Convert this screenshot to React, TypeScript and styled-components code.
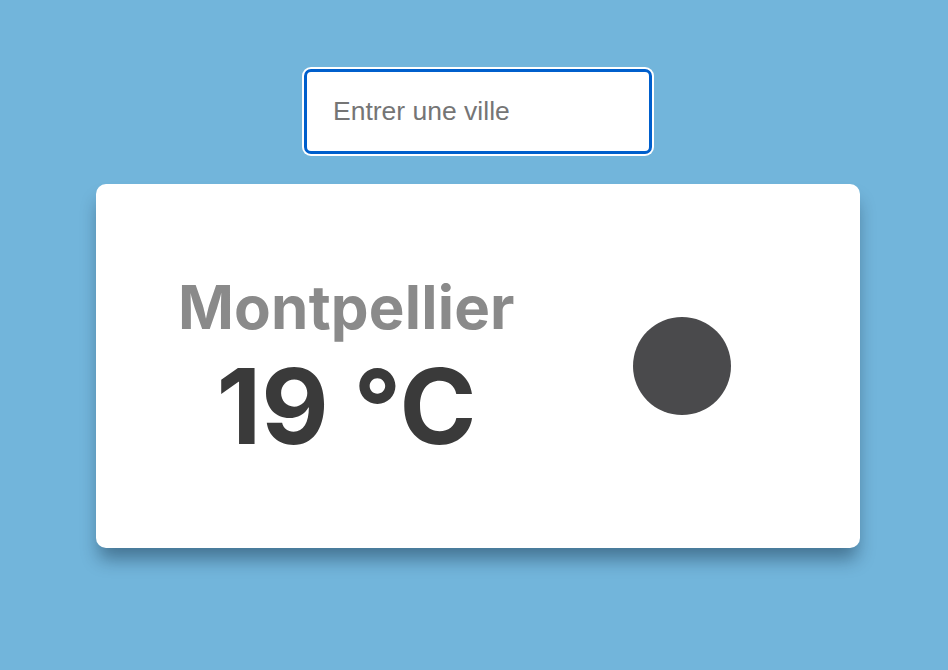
import styled, { createGlobalStyle } from 'styled-components';

const GlobalStyle = createGlobalStyle`
  html, body {
    margin: 0;
    padding: 0;
    overflow: hidden;
    background: #72b5db;
    font-family: Inter, "Liberation Sans", sans-serif;
  }
`;

const Page = styled.main`
  height: 100vh;
  display: flex;
  flex-direction: column;
  align-items: center;
  padding: 69px 0 0 8px;
  box-sizing: border-box;
`;

const SearchInput = styled.input`
  width: 348px;
  height: 85px;
  box-sizing: border-box;
  padding: 0 26px;
  border: 3px solid #005fcc;
  border-radius: 7px;
  box-shadow: 0 0 0 2px #ffffff;
  outline: none;
  background: #ffffff;
  font-family: "Liberation Sans", Arial, sans-serif;
  font-size: 26.5px;
  color: #222;
  caret-color: #000;

  &::placeholder {
    color: #757575;
  }
`;

const Card = styled.section`
  margin-top: 30px;
  width: 764px;
  height: 364px;
  box-sizing: border-box;
  background: #ffffff;
  border-radius: 10px;
  box-shadow: 0 14px 18px -3px rgba(0, 20, 40, 0.4);
  display: flex;
  align-items: center;
  padding-left: 82px;
  gap: 118px;
`;

const Info = styled.div`
  display: flex;
  flex-direction: column;
  align-items: center;
`;

const City = styled.h1`
  margin: 0;
  font-size: 60px;
  font-weight: 700;
  color: #8a8a8a;
  letter-spacing: 0.2px;
  line-height: 1.1;
`;

const Temp = styled.div`
  font-size: 104px;
  font-weight: 700;
  color: #3a3a3a;
  line-height: 1;
  margin-top: 14px;
`;

const Icon = styled.div`
  width: 98px;
  height: 98px;
  border-radius: 50%;
  background: #4a4a4c;
  flex-shrink: 0;
`;

export default function App() {
  return (
    <>
      <GlobalStyle />
      <Page>
        <SearchInput autoFocus type="text" placeholder="Entrer une ville" />
        <Card>
          <Info>
            <City>Montpellier</City>
            <Temp>19 °C</Temp>
          </Info>
          <Icon />
        </Card>
      </Page>
    </>
  );
}
